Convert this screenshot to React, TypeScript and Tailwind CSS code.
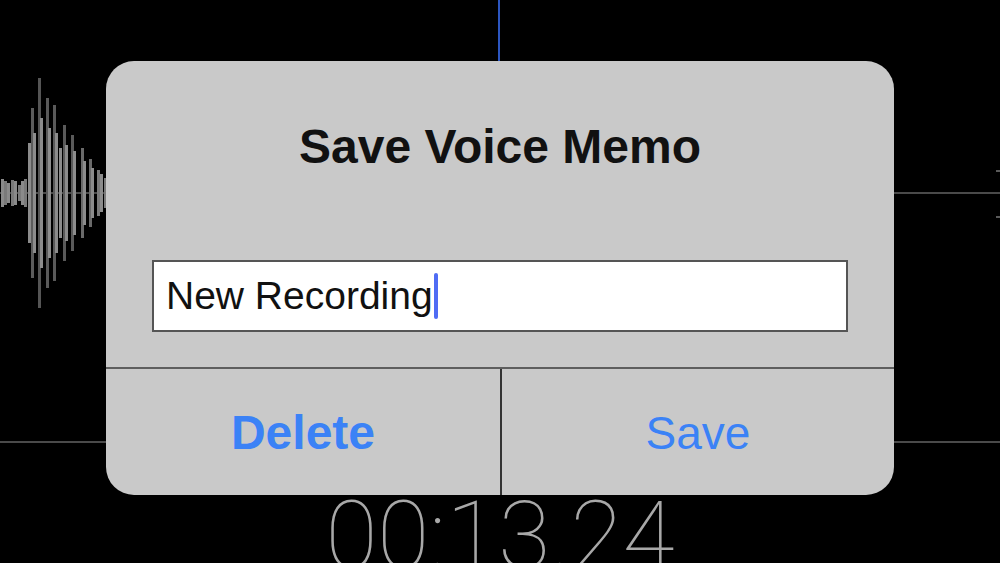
import React from "react";

// waveform bars: x, half-height, brightness
const bars: [number, number, string][] = [
  [1, 14, "#8a8a8a"],
  [4, 12, "#7a7a7a"],
  [7, 10, "#8a8a8a"],
  [11, 13, "#7a7a7a"],
  [14, 12, "#8a8a8a"],
  [18, 8, "#7a7a7a"],
  [21, 12, "#8a8a8a"],
  [24, 14, "#7a7a7a"],
  [28, 50, "#8c8c8c"],
  [31, 85, "#5c5c5c"],
  [33, 60, "#8c8c8c"],
  [38, 115, "#555555"],
  [40, 75, "#8c8c8c"],
  [46, 95, "#5a5a5a"],
  [48, 65, "#8e8e8e"],
  [53, 88, "#5a5a5a"],
  [55, 60, "#8c8c8c"],
  [59, 45, "#8c8c8c"],
  [63, 68, "#5a5a5a"],
  [65, 48, "#8c8c8c"],
  [71, 58, "#5a5a5a"],
  [73, 42, "#8c8c8c"],
  [81, 45, "#6a6a6a"],
  [83, 32, "#8c8c8c"],
  [89, 34, "#6a6a6a"],
  [91, 25, "#8c8c8c"],
  [97, 23, "#7a7a7a"],
  [100, 19, "#8c8c8c"],
  [104, 15, "#7a7a7a"],
];

function Backdrop() {
  return (
    <svg className="absolute inset-0" width="1000" height="563" viewBox="0 0 1000 563">
      <line x1="0" y1="193" x2="1000" y2="193" stroke="#4a4a4a" strokeWidth="2" />
      <line x1="0" y1="442" x2="1000" y2="442" stroke="#4a4a4a" strokeWidth="2" />
      {bars.map(([x, h, c], i) => (
        <rect key={i} x={x} y={193 - h} width="3" height={h * 2} fill={c} />
      ))}
      <rect x="996" y="170" width="4" height="2" fill="#5a5a5a" />
      <rect x="996" y="216" width="4" height="2" fill="#5a5a5a" />
      <line x1="499" y1="0" x2="499" y2="62" stroke="#2c56c0" strokeWidth="2" />
    </svg>
  );
}

export default function App() {
  return (
    <div className="relative w-[1000px] h-[563px] bg-black overflow-hidden font-['Liberation_Sans',Arial,sans-serif]">
      <Backdrop />
      <div className="relative flex flex-col items-center">
        <div className="mt-[61px] w-[788px] h-[434px] rounded-[28px] bg-[#c9c9c9] flex flex-col overflow-hidden">
          <h1 className="pt-[58px] text-center text-[48px] leading-[56px] font-bold text-[#111]">
            Save Voice Memo
          </h1>
          <div className="mt-[85px] mx-[46px] h-[72px] border-2 border-[#555] bg-white flex items-center pl-[12px]">
            <span className="text-[39px] text-[#111]">New Recording</span>
            <span className="ml-[1px] w-[4px] h-[46px] rounded-full bg-[#4f6cf4]" />
          </div>
          <div className="mt-[35px] grid grid-cols-2 flex-1 border-t-2 border-[#5e5e5e]">
            <button className="flex items-center justify-center pt-[2px] text-[48px] font-bold text-[#3b82f6]">
              Delete
            </button>
            <button className="flex items-center justify-center pt-[2px] border-l-2 border-[#333] text-[46px] text-[#3b82f6]">
              Save
            </button>
          </div>
        </div>
        <div className="mt-[-7px] text-[95px] leading-none font-thin text-[#a8a8a8] font-['Roboto',sans-serif]">
          00:13.24
        </div>
      </div>
    </div>
  );
}
